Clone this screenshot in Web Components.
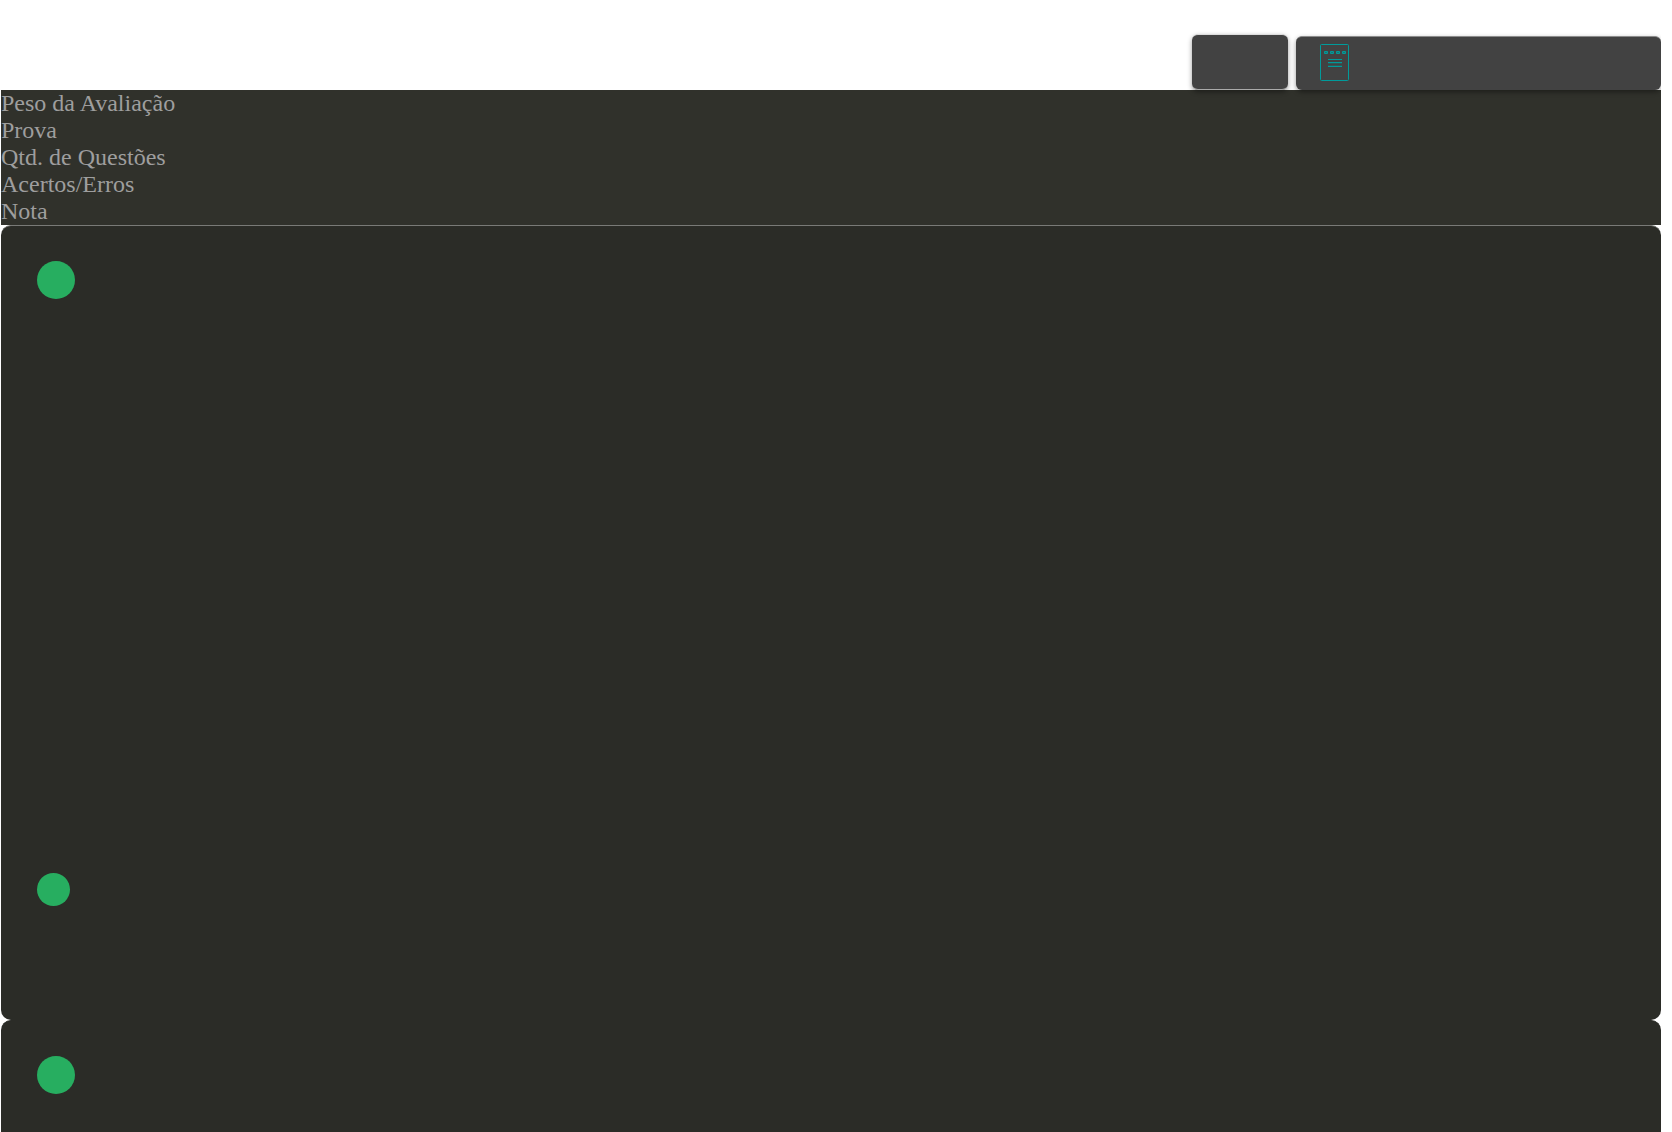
<!DOCTYPE html>
<html lang="pt-BR">
<head>
<meta charset="utf-8">
<title>Avaliações</title>
<style>
html { background: #fff; }
body { margin: 0 11px 0 1px; font: 24px/27px "Liberation Serif", serif; height: 100vh; overflow: hidden; display: flex; flex-direction: column; }
result-card:last-of-type { flex: 1; }
</style>
</head>
<body>
<action-bar>
  <tool-button variant="small" label="Voltar"></tool-button>
  <tool-button variant="wide" label="Calendário"><calendar-icon></calendar-icon></tool-button>
</action-bar>
<result-header>
  <span>Peso da Avaliação</span>
  <span>Prova</span>
  <span>Qtd. de Questões</span>
  <span>Acertos/Erros</span>
  <span>Nota</span>
</result-header>
<result-card>
  <status-dot></status-dot>
  <status-dot slot="footer" size="small"></status-dot>
</result-card>
<result-card open-ended><status-dot></status-dot></result-card>
<script>
const define = (name, html, setup) => {
  const template = document.createElement('template');
  template.innerHTML = html;
  customElements.define(name, class extends HTMLElement {
    constructor() {
      super();
      this.attachShadow({ mode: 'open' }).append(template.content.cloneNode(true));
    }
    connectedCallback() { if (setup) setup(this); }
  });
};

define('action-bar', `<style>
:host { display: flex; justify-content: flex-end; align-items: flex-end; gap: 8px; padding-top: 34px; position: relative; }
</style><slot></slot>`);

define('tool-button', `<style>
:host { display: block; }
:host([variant="small"]) { width: 96px; height: 56px; }
:host([variant="wide"]) { width: 22%; min-width: 280px; height: 54px; position: relative; z-index: 1; }
button { box-sizing: border-box; display: flex; align-items: center; width: 100%; height: 100%; margin: 0; padding: 0 24px; border: 0 solid #8c8c8c; border-top-width: 1px; border-radius: 6px; background: #424242; box-shadow: 0 2px 5px rgba(0,0,0,.4); }
:host([variant="small"]) button { border-top-color: #ddd; border-bottom: 1px solid #aaa; }
</style><button type="button"><slot></slot></button>`, el => {
  el.shadowRoot.querySelector('button').setAttribute('aria-label', el.getAttribute('label'));
});

define('calendar-icon', `<style>
:host { display: block; width: 30px; height: 40px; }
svg { display: block; }
</style><svg width="30" height="38" viewBox="0 0 30 38" fill="none" stroke="#009b9b" aria-hidden="true">
<rect x=".5" y=".5" width="28" height="36" rx="1"/>
<g stroke="none" fill="#009b9b"><rect x="4" y="7" width="4" height="3" rx="1"/><rect x="10" y="7" width="4" height="3" rx="1"/><rect x="16" y="7" width="4" height="3" rx="1"/><rect x="22" y="7" width="4" height="3" rx="1"/></g>
<path d="M5 8.5h2M11 8.5h2M17 8.5h2M23 8.5h2" stroke="#177574"/>
<path d="M8 15.5h14M8 18.5h14M8 22.5h14"/><path d="M8 19.5h14M8 21.5h14" opacity=".25"/>
</svg>`);

define('result-header', `<style>
:host { display: flex; flex-direction: column; color: #9e9e9e; background: #30312b; }
</style><slot></slot>`);

define('result-card', `<style>
:host { box-sizing: border-box; display: flex; flex-direction: column; justify-content: space-between; gap: 574px; padding: 35px 36px 114px; background: #2b2c27; border-radius: 10px; border-top: 1px solid #797a77; }
:host([open-ended]) { padding-bottom: 0; gap: 0; border-top-color: #2b2c27; border-radius: 10px 10px 0 0; }
</style><slot></slot><slot name="footer"></slot>`);

define('status-dot', `<style>
:host { display: block; width: 38px; height: 38px; border-radius: 50%; background: #27ae60; }
:host([size="small"]) { width: 33px; height: 33px; }
</style>`);
</script>
</body>
</html>
